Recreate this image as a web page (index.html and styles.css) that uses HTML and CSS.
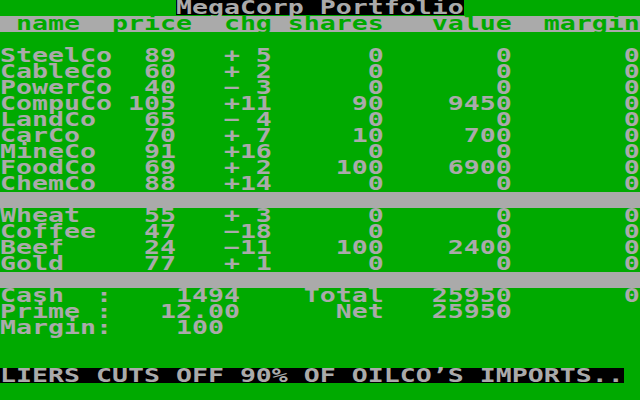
FILE: index.html
```html
<!DOCTYPE html>
<html>
<head>
<meta charset="utf-8">
<title>MegaCorp Portfolio</title>
<link rel="stylesheet" href="styles.css">
</head>
<body>
<div class="screen">
<div class="line">           <span class="inverse">MegaCorp Portfolio</span></div>
<div class="line bar"> name  price  chg shares   value  margin</div>
<div class="line"> </div>
<div class="line">SteelCo  89   + 5      0       0       0</div>
<div class="line">CableCo  60   + 2      0       0       0</div>
<div class="line">PowerCo  40   − 3      0       0       0</div>
<div class="line">CompuCo 105   +11     90    9450       0</div>
<div class="line">LandCo   65   − 4      0       0       0</div>
<div class="line">CarCo    70   + 7     10     700       0</div>
<div class="line">MineCo   91   +16      0       0       0</div>
<div class="line">FoodCo   69   + 2    100    6900       0</div>
<div class="line">ChemCo   88   +14      0       0       0</div>
<div class="line bar"> </div>
<div class="line">Wheat    55   + 3      0       0       0</div>
<div class="line">Coffee   47   −18      0       0       0</div>
<div class="line">Beef     24   −11    100    2400       0</div>
<div class="line">Gold     77   + 1      0       0       0</div>
<div class="line bar"> </div>
<div class="line">Cash  :    1494    Total   25950       0</div>
<div class="line">Prime :   12.00      Net   25950</div>
<div class="line">Margin:    100</div>
<div class="line"> </div>
<div class="line"> </div>
<div class="line"><span class="inverse">LIERS CUTS OFF 90% OF OILCO’S IMPORTS..</span></div>
<div class="line"> </div>
</div>
</body>
</html>
```
FILE: styles.css
```css
html, body {
  margin: 0;
  padding: 0;
  background: #00aa00;
  overflow: hidden;
}

.screen {
  width: 480px;
  transform: scaleX(1.333333);
  transform-origin: 0 0;
  font-family: "DejaVu Sans Mono", "Liberation Mono", monospace;
  font-weight: bold;
  font-size: 19.932px;
  line-height: 16px;
  color: #aaaaaa;
}

.line {
  height: 16px;
  white-space: pre;
}

.bar {
  background: #aaaaaa;
  color: #00aa00;
}

.inverse {
  display: inline-block;
  height: 15px;
  line-height: 16px;
  vertical-align: top;
  background: #000000;
  color: #aaaaaa;
}
```
